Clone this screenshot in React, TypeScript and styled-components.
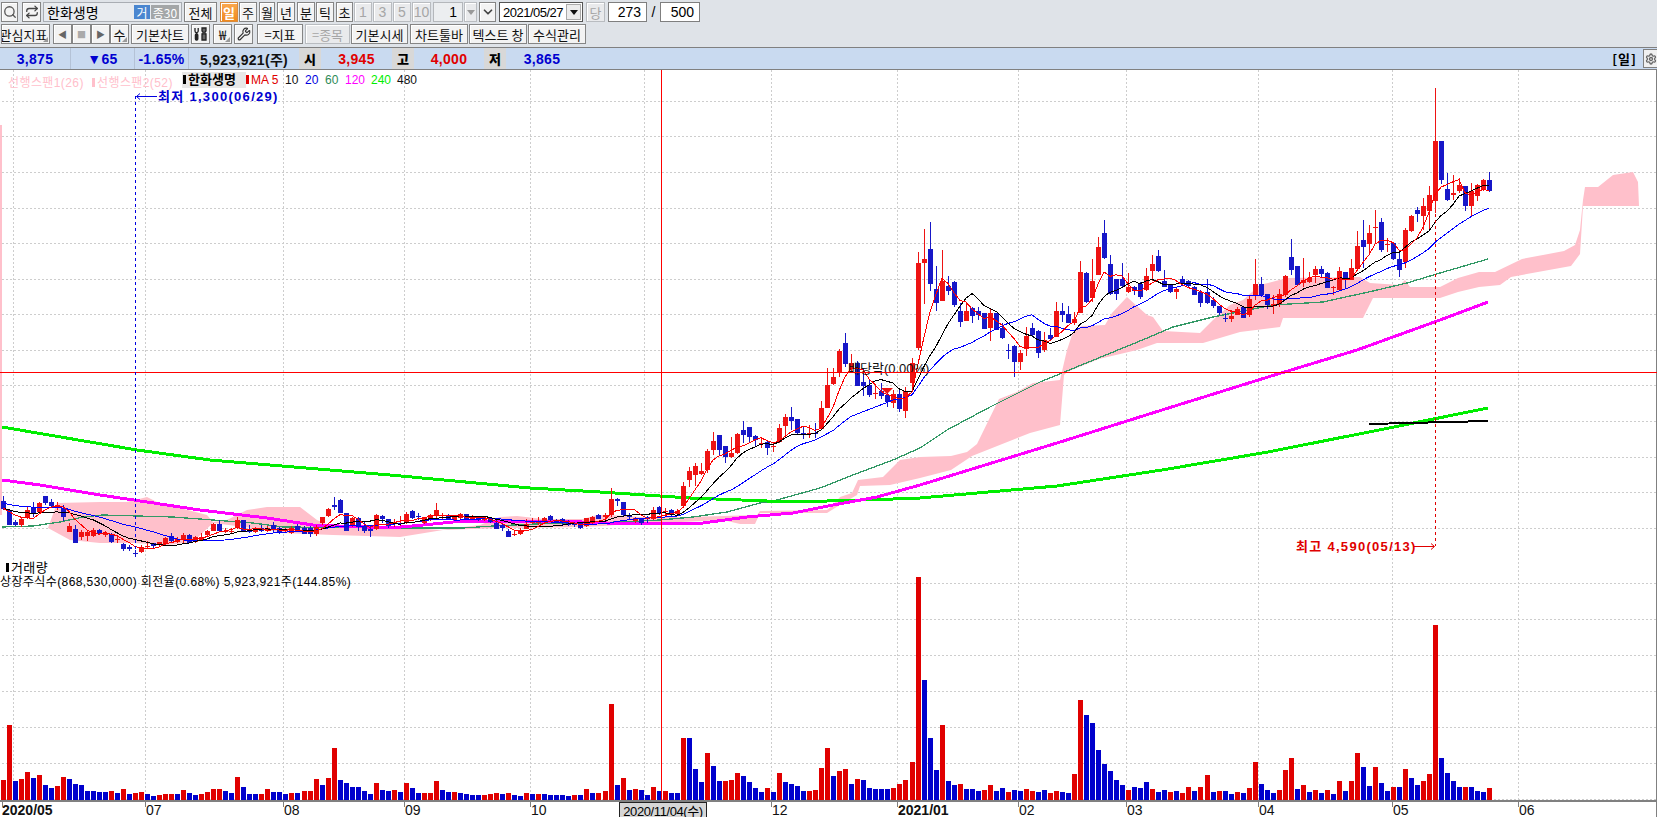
import React from "react";
import styled, { createGlobalStyle } from "styled-components";
import { Search, Repeat, Wrench, ChevronDown, Settings } from "lucide-react";

const GlobalStyle = createGlobalStyle`
  html, body { margin: 0; padding: 0; background: #fff; overflow: hidden; }
  * { box-sizing: border-box; }
  body { font-family: "Noto Sans CJK KR", "Liberation Sans", sans-serif; }
`;

// ---- data: y values are page pixels, read off the chart ----
type Candle = { up: boolean; hi: number; top: number; bot: number; lo: number };

const parseCandles = (raw: string): Candle[] =>
  raw.trim().split(/\s+/).map((c) => {
    const [hi, top, bot, lo] = c.slice(1).split(",").map(Number);
    return { up: c[0] === "r", hi, top, bot, lo };
  });

const candles = parseCandles(`
b496,501,509,510 b509,510,525,525 b520,522,525,526 r517,519,525,527 r507,510,518,519 b502,508,514,517 r502,503,512,513 b496,496,503,505
b499,502,506,507 r502,505,505,510 b505,508,517,521 r523,526,532,532 b525,529,543,543 r530,532,537,540 r530,532,536,541 r528,530,536,537
b529,530,534,535 r531,533,535,537 b533,534,542,543 r536,539,540,543 b543,544,549,551 b545,547,549,551 b550,553,554,557 r545,547,552,553
r541,546,547,548 b543,543,546,548 r542,542,545,547 r537,538,544,545 b533,536,541,542 r537,539,542,543 r533,535,540,544 b534,535,543,543
r536,537,542,543 r533,537,540,541 r530,531,535,536 r523,524,531,531 b520,524,531,531 r528,531,532,533 r528,531,531,533 r517,520,528,529
b520,520,532,532 b525,529,532,533 r527,529,532,533 b525,528,531,532 r526,528,531,532 b522,525,529,532 b527,528,533,534 r528,530,531,533
r526,528,533,534 b524,526,531,532 b526,528,534,534 b526,528,534,537 r525,527,534,536 r517,517,523,525 r508,509,516,517 b497,505,507,510
b499,500,513,513 b513,513,531,531 r517,518,525,527 b517,518,527,531 b522,526,531,533 b525,529,531,537 r514,515,529,530 b515,516,519,523
b519,519,526,528 r519,522,524,527 r516,523,523,526 r512,514,523,524 b510,511,518,519 b513,516,516,520 r517,518,523,524 r514,515,519,521
r503,510,516,518 r513,517,517,519 b514,515,519,520 r516,517,520,521 r513,514,518,520 b514,514,519,520 r515,517,519,520 b517,518,520,521
r517,518,520,521 b518,519,522,523 b518,523,529,529 b523,525,528,531 b529,531,537,537 r531,534,534,536 r528,530,534,535 r519,524,529,529
r518,522,523,524 r517,522,523,525 r517,518,521,524 b515,516,520,522 b519,520,522,523 b518,519,523,525 b520,523,525,526 b522,523,525,527
b523,523,528,529 r518,518,526,527 r516,517,523,524 b514,515,519,519 r513,515,517,518 r488,499,515,517 b498,499,501,506 b502,502,515,516
b513,515,517,520 r517,518,521,523 b518,518,523,525 b516,517,519,523 r507,510,519,520 b506,507,514,515 r508,511,512,517 b509,510,515,517
r509,511,514,515 r482,486,506,507 r467,471,480,487 r463,466,475,486 r463,471,474,475 r449,451,470,473 r432,441,450,455 b435,435,450,455
b446,446,457,463 r437,453,457,458 r433,434,453,454 b421,430,435,443 b427,427,437,442 b435,436,440,446 r437,443,443,448 b440,442,448,455
r443,446,446,452 r424,428,442,443 r414,417,426,435 b407,417,421,430 b419,419,433,434 b427,433,433,439 r425,433,433,438 b423,433,433,438
r401,408,429,430 r368,385,408,408 r368,377,384,385 r349,351,372,377 b333,343,364,367 r354,363,369,373 b361,363,386,386 b368,382,386,396
b380,385,395,397 r385,393,393,399 b383,391,396,399 b388,395,402,407 r390,394,403,408 b390,394,409,412 r387,391,411,418 r358,363,383,387
r252,263,348,350 r229,259,263,304 b222,249,284,291 b266,289,303,311 r250,281,301,301 b276,286,291,295 b281,282,305,307 b303,311,322,327
r303,311,321,321 b307,308,316,323 b307,311,315,320 b313,313,329,329 r308,313,328,341 b313,313,330,330 b323,328,338,339 b344,350,350,359
b345,346,362,377 r350,353,362,370 r327,336,349,356 b323,328,335,337 b330,331,353,358 r332,340,350,352 b328,335,339,340 r302,311,337,337
b303,311,315,322 b306,314,323,323 r312,319,323,325 r261,272,313,313 b272,273,302,303 r259,281,298,302 r237,247,275,275 b220,233,258,259
b255,264,294,295 b279,279,294,300 b263,279,286,288 r273,287,292,293 b286,287,291,295 b282,284,297,299 r268,276,290,291 r255,264,271,281
b250,256,271,272 b270,281,287,287 b285,285,292,293 r288,289,292,299 b276,279,284,286 b280,281,286,287 b286,287,295,295 b290,292,303,307
b279,292,303,304 b297,300,306,308 b306,306,313,315 b313,318,318,322 r310,316,319,322 r307,309,315,315 b307,307,318,318 r295,299,315,317
r259,284,295,300 b277,284,295,297 b294,294,305,309 r295,304,306,314 r289,294,304,307 r275,276,295,297 b239,257,270,275 b266,266,285,286
r258,280,283,287 r272,278,282,283 r266,269,275,283 b266,269,274,277 b272,273,288,288 r286,287,288,295 r267,271,290,291 b272,272,280,288
r259,268,280,280 r231,246,269,270 b220,240,247,268 r225,233,244,253 r210,227,227,243 b218,222,250,252 r238,244,244,252 b243,243,259,260
b250,259,270,277 r228,230,262,268 r215,216,231,232 b207,210,214,222 r198,206,216,230 r186,195,211,230 r88,141,201,213 b141,141,180,184
b173,189,200,201 r175,193,195,200 r178,185,191,193 b186,186,206,211 r183,191,206,216 r184,185,196,201 r179,180,190,191 b172,180,191,192
`);

const parseBars = (raw: string) =>
  raw.trim().split(/\s+/).map((b) => ({ up: b[0] === "r", h: Number(b.slice(1)) }));

const volumes = parseBars(`
r20 r75 b19 r21 r28 b22 r25 b15 b12 r14 r23 b21 b16 b15 b9 b9 b8 b8 r9 b7 r11 b6 r7 r8 b6 b4 r5 r6 r6 b6 r10 b7 b5 r6 r8 r11 r11 b9 b7 r23
b13 b6 b6 r6 r11 b8 b8 b6 r7 b7 r9 r9 r21 b15 r22 r52 b20 b17 b13 b13 b9 b6 r17 b10 b9 r10 b8
r17 b12 b7 r7 r7 r19 b10 b8 r8 b7 b6 b5 b5 r5 r6 r7 b6 r7 b5 b4 r7 b6 r6 b6 b5 b5 b5 b4 r5 b5 r11 b7 r7
r9 r96 b15 r22 b10 r11 b10 b5 r13 b9 r9 b7 b7 r62 b62 b31 b18 r47 b34 b19 r19 r20 r27 b24 b18 b12 b8 r12 b8
r27 b18 b16 b14 b9 r9 r10 r32 r52 b24 r29 r31 b16 r21 b20 b12 b11 b11 b11 r12 r16 r20 r38 r223 b120 b62 b30 r75 b19 b15 r16 b11 b11 b9 r10 r15 b9
b12 r8 b10 b9 r11 r9 b8 b10 r7 r9 b8 b7 r26 r100 b85 b77 b50 b36 b29 b20 b15 r10 b13 b12 b18 r11 b8 b10 r8 b9 r7 r13 b9
r13 r25 b8 r9 b9 b6 r8 b7 r12 r38 b16 b10 b7 r10 r30 r42 b11 r15 b8 r10 b7 r10 b6 r19 b9 r19 r47 b33 b14 r33 b17 b9 r13 b13 r31 b22 b15 r19 r26 r175 b42 b27 b19 b13 r13 b13 b9 b8 r12
`);

const slotX = (i: number) => Math.floor(1 + i * 6.02);

const movingAvg = (n: number, seed: number) => {
  const closes = candles.map((c) => (c.up ? c.top : c.bot));
  return closes
    .map((_, i) => {
      let sum = 0;
      for (let k = i - n + 1; k <= i; k++) sum += k < 0 ? seed : closes[k];
      return `${slotX(i) + 2},${(sum / n).toFixed(1)}`;
    })
    .join(" ");
};

const ma60 =
  "2,527 33,526 60,522 83,517 103,515 173,517 213,520 253,523 283,527 400,528 463,528 493,526 557,523 623,522 660,520 693,517 727,512 760,503 777,500 820,488 853,475 893,460 920,448 947,430 990,407 1040,382 1118,350 1140,341 1173,327 1213,317 1273,305 1323,302 1373,291 1407,283 1440,273 1488,259";
const ma120 =
  "2,480 40,485 100,495 147,502 200,510 267,518 313,525 390,528 423,525 463,521 557,521 607,523 703,523 747,517 793,513 833,505 877,497 920,485 1057,443 1162,410 1268,377 1357,350 1440,320 1488,302";
const ma240 =
  "2,427 137,450 210,460 390,475 530,488 600,492 690,498 767,501 827,501 893,499 920,498 1057,486 1162,470 1268,452 1374,431 1488,408";
const cloud =
  "48,528 57,503 100,502 127,502 147,497 157,502 207,515 213,522 227,520 247,510 267,507 300,507 317,520 333,527 390,527 440,530 480,525 500,517 517,516 543,519 583,519 597,515 610,515 640,517 690,517 757,515 760,511 827,510 833,505 840,497 852,493 858,480 883,477 900,460 920,457 951,456 967,452 977,444 999,399 1017,392 1033,383 1060,380 1067,350 1073,332 1082,326 1105,325 1112,313 1127,297 1147,315 1153,317 1163,331 1200,333 1213,320 1230,305 1243,300 1260,285 1287,278 1360,277 1370,283 1400,285 1405,280 1410,287 1440,287 1458,278 1479,272 1495,272 1522,259 1564,251 1575,245 1580,230 1583,200 1585,187 1598,187 1613,175 1633,172 1638,182 1639,206 1583,206 1580,254 1571,266 1511,277 1500,285 1479,287 1458,292 1440,298 1373,298 1363,318 1283,318 1280,327 1240,332 1203,343 1157,343 1137,350 1099,359 1067,372 1064,375 1060,425 1030,433 972,456 951,470 920,478 890,485 860,486 857,495 843,503 827,513 760,513 755,524 740,524 723,520 660,523 640,523 603,526 583,527 500,528 443,530 400,537 333,535 283,533 267,530 213,523 193,542 167,545 133,543 100,543 70,540";

const gridX = [13, 145, 283, 404, 530, 644, 771, 897, 1018, 1126, 1258, 1392, 1518];
const gridY = [101, 136, 172, 208, 243, 279, 314, 350, 385, 421, 457, 492, 528, 583, 619, 655, 691, 727, 763, 799];

const axisLabels = [
  { x: 2, t: "2020/05", bold: true, tick: 2 },
  { x: 146, t: "07", tick: 145 },
  { x: 284, t: "08", tick: 283 },
  { x: 405, t: "09", tick: 404 },
  { x: 531, t: "10", tick: 530 },
  { x: 772, t: "12", tick: 771 },
  { x: 898, t: "2021/01", bold: true, tick: 897 },
  { x: 1019, t: "02", tick: 1018 },
  { x: 1127, t: "03", tick: 1126 },
  { x: 1259, t: "04", tick: 1258 },
  { x: 1393, t: "05", tick: 1392 },
  { x: 1519, t: "06", tick: 1518 },
];

// ---- toolbar ----
const Page = styled.div`
  width: 1657px;
  height: 817px;
  display: flex;
  flex-direction: column;
  overflow: hidden;
  background: #fff;
`;

const ToolArea = styled.div`
  height: 47px;
  background: #dfe3e8;
  padding: 2px 0 0 1px;
  display: flex;
  flex-direction: column;
  gap: 2px;
`;

const ToolRow = styled.div`
  height: 20px;
  display: flex;
  align-items: stretch;
`;

const Btn = styled.div<{ $w: number; $ml?: number; $off?: boolean; $tri?: boolean }>`
  position: relative;
  width: ${(p) => p.$w}px;
  margin-left: ${(p) => p.$ml ?? 0}px;
  flex: none;
  display: flex;
  align-items: center;
  justify-content: center;
  overflow: hidden;
  white-space: nowrap;
  font-size: 13px;
  line-height: 1;
  color: ${(p) => (p.$off ? "#a6a6a6" : "#111")};
  background: ${(p) => (p.$off ? "#e9eaec" : "#f3f3f3")};
  border: 1px solid ${(p) => (p.$off ? "#b9bcc0" : "#858585")};
  box-shadow: inset 1px 1px 0 #fff;
  &::after {
    content: "";
    display: ${(p) => (p.$tri ? "block" : "none")};
    position: absolute;
    right: 1px;
    bottom: 1px;
    border-style: solid;
    border-width: 0 0 5px 5px;
    border-color: transparent transparent #9a9a9a transparent;
  }
`;

const ActiveBtn = styled(Btn)`
  background: linear-gradient(#fba84f, #f08a1e);
  border-color: #d98a3a;
  color: #fff;
  font-weight: 700;
`;

const Digit = styled(Btn)`
  font-family: "Liberation Sans", sans-serif;
  font-size: 14px;
`;

const StockBox = styled.div`
  width: 139px;
  margin-left: 2px;
  flex: none;
  display: flex;
  align-items: center;
  padding: 1px 2px 1px 3px;
  background: #e8ebef;
  border: 1px solid #a9adb3;
  font-size: 14px;
`;

const StockName = styled.span`
  flex: 1;
`;

const MarketTag = styled.span<{ $bg: string; $w: number }>`
  width: ${(p) => p.$w}px;
  height: 14px;
  display: flex;
  align-items: center;
  justify-content: center;
  background: ${(p) => p.$bg};
  color: #fff;
  font-size: 12px;
  margin-left: 1px;
  white-space: nowrap;
`;

const FieldBox = styled.div<{ $w: number; $ml: number }>`
  width: ${(p) => p.$w}px;
  margin-left: ${(p) => p.$ml}px;
  flex: none;
  display: flex;
  align-items: center;
  justify-content: flex-end;
  padding-right: 5px;
  background: #fff;
  border: 1px solid #7f7f7f;
  font: 14px "Liberation Sans", sans-serif;
`;

const SpinBox = styled(FieldBox)`
  background: #eceef0;
  border-color: #b4b7bb;
`;

const DateBox = styled.div`
  width: 84px;
  margin-left: 3px;
  flex: none;
  display: flex;
  align-items: center;
  justify-content: space-between;
  padding: 0 1px 0 3px;
  background: #fff;
  border: 1px solid #555;
  font: 13px "Liberation Sans", sans-serif;
  letter-spacing: -0.5px;
`;

const DropArrow = styled.span<{ $dim?: boolean }>`
  width: 0;
  height: 0;
  border-style: solid;
  border-width: 5px 4px 0 4px;
  border-color: ${(p) => (p.$dim ? "#999" : "#111")} transparent transparent transparent;
`;

const DropBtn = styled.span`
  width: 15px;
  height: 16px;
  display: flex;
  align-items: center;
  justify-content: center;
  background: #ececec;
  border: 1px solid #aaa;
`;

const Slash = styled.span`
  width: 13px;
  flex: none;
  text-align: center;
  font: 14px/20px "Liberation Sans", sans-serif;
`;

const NavGlyph = styled.span<{ $c: string }>`
  color: ${(p) => p.$c};
  font-size: 9px;
`;

const ClippedLabel = styled.span`
  margin-left: -4px;
`;

// ---- quote strip ----
const QuoteBar = styled.div`
  height: 23px;
  background: #c9daf0;
  border-top: 1px solid #808080;
  border-bottom: 1px solid #808080;
  display: flex;
  align-items: stretch;
`;

const QuoteCell = styled.div<{ $w: number; $c: string; $line?: boolean }>`
  width: ${(p) => p.$w}px;
  flex: none;
  display: flex;
  align-items: center;
  justify-content: center;
  color: ${(p) => p.$c};
  font: 700 14px "Liberation Sans", "Noto Sans CJK KR", sans-serif;
  letter-spacing: 0.3px;
  border-right: ${(p) => (p.$line ? "1px solid #b4c2d6" : "none")};
`;

const QuoteTag = styled.div`
  width: 22px;
  flex: none;
  display: flex;
  align-items: center;
  justify-content: center;
  background: #d8d8d8;
  font-size: 13px;
  font-weight: 900;
`;

const Period = styled.div`
  margin-left: auto;
  display: flex;
  align-items: center;
  font-size: 13px;
  font-weight: 700;
  letter-spacing: 1px;
  margin-right: 6px;
`;

const GearBtn = styled.div`
  width: 14px;
  margin: 1px 0;
  display: flex;
  align-items: center;
  background: #f0f0f0;
  border: 1px solid #808080;
  border-right: none;
  overflow: hidden;
  padding-left: 1px;
`;

// ---- chart ----
const ChartArea = styled.div`
  position: relative;
  flex: 1;
  border-right: 1px solid #808080;
`;

const ChartSvg = styled.svg`
  display: block;
`;

const Legend = styled.div`
  position: absolute;
  left: 9px;
  top: 2px;
  height: 16px;
  display: flex;
  align-items: center;
  font: 12px "Liberation Sans", "Noto Sans CJK KR", sans-serif;
  white-space: nowrap;
`;

const LegendItem = styled.span<{ $c: string; $left: number; $track?: number }>`
  position: absolute;
  left: ${(p) => p.$left}px;
  top: 1px;
  color: ${(p) => p.$c};
  letter-spacing: ${(p) => p.$track ?? 0}px;
`;

const Mark = styled.span<{ $c: string }>`
  display: inline-block;
  width: 3px;
  height: 9px;
  margin-right: 2px;
  background: ${(p) => p.$c};
`;

const StockTag = styled.span`
  position: absolute;
  left: 173px;
  top: 0;
  width: 64px;
  height: 16px;
  padding-left: 1px;
  background: #e8e8e8;
  font-weight: 700;
  font-size: 13px;
  line-height: 16px;
`;

const VolumeInfo = styled.div`
  position: absolute;
  left: 0;
  top: 490px;
  font: 12px/15px "Liberation Sans", "Noto Sans CJK KR", sans-serif;
  letter-spacing: 0.4px;
  white-space: nowrap;
`;

const VolumeTitle = styled.div`
  padding-left: 6px;
  font-size: 13px;
`;

const DateTag = styled.div`
  position: absolute;
  left: 619px;
  bottom: 0;
  width: 88px;
  height: 15px;
  display: flex;
  align-items: center;
  justify-content: center;
  background: #d6d6d6;
  border: 1px solid #222;
  border-bottom: none;
  font: 13px "Liberation Sans", "Noto Sans CJK KR", sans-serif;
  letter-spacing: -0.4px;
  white-space: nowrap;
`;

const AxisText = styled.text<{ $bold?: boolean }>`
  font: ${(p) => (p.$bold ? 700 : 400)} 14px "Liberation Sans", sans-serif;
  fill: #111;
`;

const NoteText = styled.text<{ $c: string }>`
  font: 700 13px "Liberation Sans", "Noto Sans CJK KR", sans-serif;
  letter-spacing: 1.3px;
  fill: ${(p) => p.$c};
`;

const PlainNote = styled.text`
  font: 13px "Liberation Sans", "Noto Sans CJK KR", sans-serif;
  fill: #111;
`;

const ToolsIcon = () => (
  <svg width="16" height="16" viewBox="0 0 16 16" fill="none" stroke="#222" strokeWidth="1.3">
    <path d="M2 2v3a1.6 1.6 0 0 0 3.2 0V2M3.6 7v6.5" />
    <rect x="2.4" y="8" width="2.4" height="6" rx="1" fill="#222" />
    <path d="M9 2h4v3l-1 1v2h1v6H9V8h1V6L9 5z" fill="#666" />
  </svg>
);

const App = () => (
  <Page>
    <GlobalStyle />
    <ToolArea>
      <ToolRow>
        <Btn $w={17}>
          <Search size={14} color="#555" strokeWidth={2.2} />
        </Btn>
        <Btn $w={19} $ml={4}>
          <Repeat size={14} color="#444" strokeWidth={2.2} />
        </Btn>
        <StockBox>
          <StockName>한화생명</StockName>
          <MarketTag $bg="#4a86d0" $w={16}>거</MarketTag>
          <MarketTag $bg="#a3a6a8" $w={28}>종30</MarketTag>
        </StockBox>
        <Btn $w={33} $ml={2}>전체</Btn>
        <ActiveBtn $w={18} $ml={3}>일</ActiveBtn>
        <Btn $w={18} $ml={1}>주</Btn>
        <Btn $w={16} $ml={2}>월</Btn>
        <Btn $w={18} $ml={2}>년</Btn>
        <Btn $w={18} $ml={2}>분</Btn>
        <Btn $w={18} $ml={1}>틱</Btn>
        <Btn $w={17} $ml={2}>초</Btn>
        <Digit $w={18} $ml={1} $off>1</Digit>
        <Digit $w={19} $ml={1} $off>3</Digit>
        <Digit $w={18} $ml={1} $off>5</Digit>
        <Digit $w={19} $ml={1} $off>10</Digit>
        <SpinBox $w={30} $ml={2}>1</SpinBox>
        <Btn $w={13} $ml={1} $off>
          <DropArrow $dim />
        </Btn>
        <Btn $w={17} $ml={2}>
          <ChevronDown size={14} color="#444" strokeWidth={3} />
        </Btn>
        <DateBox>
          2021/05/27
          <DropBtn>
            <DropArrow />
          </DropBtn>
        </DateBox>
        <Btn $w={19} $ml={3} $off>당</Btn>
        <FieldBox $w={39} $ml={3}>273</FieldBox>
        <Slash>/</Slash>
        <FieldBox $w={40} $ml={0}>500</FieldBox>
      </ToolRow>
      <ToolRow>
        <Btn $w={49} $tri>
          <ClippedLabel>관심지표</ClippedLabel>
        </Btn>
        <Btn $w={19} $ml={3}>
          <NavGlyph $c="#666">◀</NavGlyph>
        </Btn>
        <Btn $w={19}>
          <NavGlyph $c="#aaa">■</NavGlyph>
        </Btn>
        <Btn $w={19}>
          <NavGlyph $c="#666">▶</NavGlyph>
        </Btn>
        <Btn $w={19} $ml={0} $tri>수</Btn>
        <Btn $w={58} $ml={2}>기본차트</Btn>
        <Btn $w={19} $ml={2}>
          <ToolsIcon />
        </Btn>
        <Btn $w={19} $ml={3} $tri>₩</Btn>
        <Btn $w={19} $ml={2}>
          <Wrench size={14} color="#333" />
        </Btn>
        <Btn $w={46} $ml={4}>=지표</Btn>
        <Btn $w={45} $ml={2} $off>=종목</Btn>
        <Btn $w={57} $ml={1}>기본시세</Btn>
        <Btn $w={58} $ml={2}>차트툴바</Btn>
        <Btn $w={58} $ml={1}>텍스트 창</Btn>
        <Btn $w={58} $ml={1}>수식관리</Btn>
      </ToolRow>
    </ToolArea>

    <QuoteBar>
      <QuoteCell $w={71} $c="#0000d0" $line>3,875</QuoteCell>
      <QuoteCell $w={64} $c="#0000d0" $line>▼65</QuoteCell>
      <QuoteCell $w={54} $c="#0000d0" $line>-1.65%</QuoteCell>
      <QuoteCell $w={110} $c="#111">5,923,921(주)</QuoteCell>
      <QuoteTag>시</QuoteTag>
      <QuoteCell $w={71} $c="#e00000">3,945</QuoteCell>
      <QuoteTag>고</QuoteTag>
      <QuoteCell $w={70} $c="#e00000">4,000</QuoteCell>
      <QuoteTag>저</QuoteTag>
      <QuoteCell $w={72} $c="#0000d0">3,865</QuoteCell>
      <Period>[일]</Period>
      <GearBtn>
        <Settings size={14} color="#666" strokeWidth={2.6} />
      </GearBtn>
    </QuoteBar>

    <ChartArea>
      <ChartSvg width={1657} height={747} viewBox="0 70 1657 747">
        {gridX.map((x) => (
          <line key={x} x1={x + 0.5} x2={x + 0.5} y1={70} y2={800} stroke="#cdcdcd" strokeDasharray="2 2" />
        ))}
        {gridY.map((y) => (
          <line key={y} x1={2} x2={1656} y1={y + 0.5} y2={y + 0.5} stroke="#cdcdcd" strokeDasharray="2 2" />
        ))}
        <rect x={0} y={125} width={2} height={390} fill="#ffc0cb" />

        <polygon points={cloud} fill="#ffc0cb" />
        <polyline points={ma60} fill="none" stroke="#339966" strokeWidth={1.3} shapeRendering="crispEdges" />
        <polyline points={ma240} fill="none" stroke="#00ee00" strokeWidth={3} shapeRendering="crispEdges" />
        <polyline points={ma120} fill="none" stroke="#ff00ff" strokeWidth={3} shapeRendering="crispEdges" />
        <polyline points="1369,424 1488,421" fill="none" stroke="#000" strokeWidth={2} shapeRendering="crispEdges" />

        <g shapeRendering="crispEdges">
          {candles.map((c, i) => {
            const x = slotX(i);
            const color = c.up ? "#ee1313" : "#1717c8";
            return (
              <g key={i}>
                <rect x={x + 2} y={c.hi} width={1} height={c.lo - c.hi} fill={color} />
                <rect x={x} y={c.top} width={5} height={Math.max(c.bot - c.top, 1)} fill={color} />
              </g>
            );
          })}
        </g>

        <g shapeRendering="crispEdges" fill="none" strokeWidth={1}>
          <polyline points={movingAvg(20, 503)} stroke="#0000ff" />
          <polyline points={movingAvg(10, 508)} stroke="#000" />
          <polyline points={movingAvg(5, 508)} stroke="#ff0000" />
        </g>

        <polygon points="881,388 893,388 887,394" fill="#ee1313" />
        <PlainNote x={848} y={373}>배당락(0.00%)</PlainNote>

        <g shapeRendering="crispEdges">
          {volumes.map((b, i) => (
            <rect key={i} x={slotX(i)} y={800 - b.h} width={5} height={b.h} fill={b.up ? "#e00000" : "#0000cc"} />
          ))}
        </g>

        <line x1={661.5} x2={661.5} y1={70} y2={801} stroke="#f00" />
        <line x1={0} x2={1657} y1={372.5} y2={372.5} stroke="#f00" />

        <line x1={135.5} x2={135.5} y1={96} y2={552} stroke="#0000e0" strokeDasharray="3 3" />
        <path d="M136.5 96.5H157M140 93.5l-3.5 3 3.5 3" fill="none" stroke="#0000e0" />
        <NoteText x={158} y={101} $c="#0000d0">최저 1,300(06/29)</NoteText>

        <line x1={1435.5} x2={1435.5} y1={214} y2={546} stroke="#e00000" strokeDasharray="3 3" />
        <path d="M1414 546.5H1434M1431 543.5l3.5 3-3.5 3" fill="none" stroke="#e00000" />
        <NoteText x={1296} y={551} $c="#e00000">최고 4,590(05/13)</NoteText>

        <rect x={0} y={800} width={1657} height={2} fill="#808080" />
        {axisLabels.map((a) => (
          <g key={a.t}>
            <rect x={a.tick} y={802} width={1} height={5} fill="#808080" />
            <AxisText x={a.x} y={815} $bold={a.bold}>{a.t}</AxisText>
          </g>
        ))}
      </ChartSvg>

      <Legend>
        <LegendItem $c="#ffc0cb" $left={-1} $track={0.4}>선행스팬1(26)</LegendItem>
        <LegendItem $c="#ffc0cb" $left={83} $track={0.4}>
          <Mark $c="#ffc0cb" />선행스팬2(52)
        </LegendItem>
        <StockTag>
          <Mark $c="#000" />한화생명
        </StockTag>
        <LegendItem $c="#e00000" $left={237}>
          <Mark $c="#e00000" />MA 5
        </LegendItem>
        <LegendItem $c="#111" $left={276}>10</LegendItem>
        <LegendItem $c="#0000e0" $left={296}>20</LegendItem>
        <LegendItem $c="#2e8b57" $left={316}>60</LegendItem>
        <LegendItem $c="#ff00ff" $left={336}>120</LegendItem>
        <LegendItem $c="#00ee00" $left={362}>240</LegendItem>
        <LegendItem $c="#111" $left={388}>480</LegendItem>
      </Legend>

      <VolumeInfo>
        <VolumeTitle>
          <Mark $c="#000" />거래량
        </VolumeTitle>
        상장주식수(868,530,000) 회전율(0.68%) 5,923,921주(144.85%)
      </VolumeInfo>

      <DateTag>2020/11/04(수)</DateTag>
    </ChartArea>
  </Page>
);

export default App;
